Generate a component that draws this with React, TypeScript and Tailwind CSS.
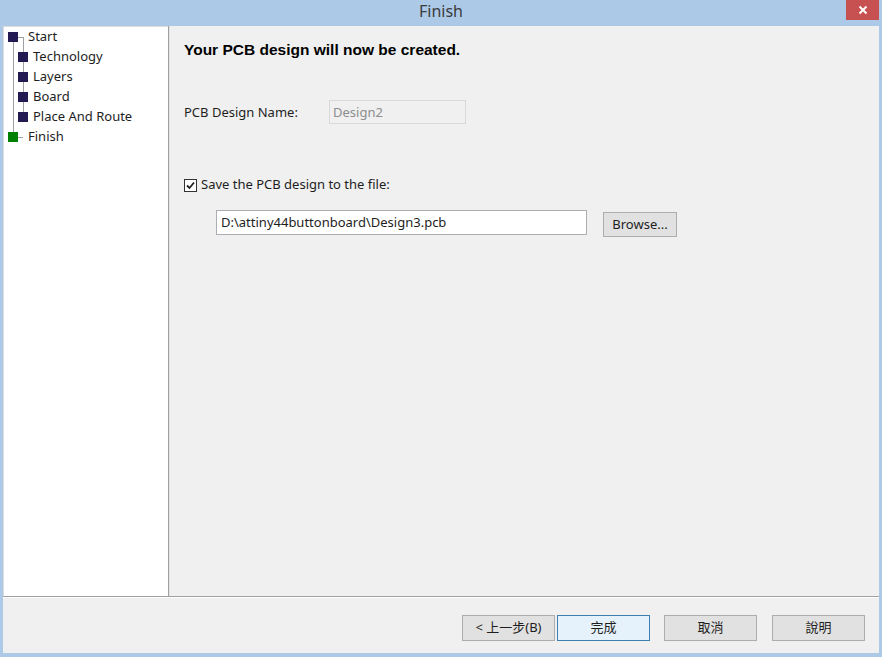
import React from 'react';

const ui = { fontFamily: '"Noto Sans", "Noto Sans CJK TC", sans-serif' };
const cjk = { fontFamily: '"Noto Sans", "Noto Sans CJK TC", sans-serif' };

type Node = { label: string; child: boolean; done?: boolean };

const steps: Node[] = [
  { label: 'Start', child: false },
  { label: 'Technology', child: true },
  { label: 'Layers', child: true },
  { label: 'Board', child: true },
  { label: 'Place And Route', child: true },
  { label: 'Finish', child: false, done: true },
];

const StepTree: React.FC = () => (
  <div className="relative">
    {/* tree lines */}
    <div className="absolute left-[9px] top-[10px] h-[100px] w-px bg-[#a0a0a0]" />
    <div className="absolute left-[19px] top-[10px] h-[80px] w-px bg-[#a0a0a0]" />
    <div className="absolute left-[14px] top-[10px] h-px w-[5px] bg-[#a0a0a0]" />
    <div className="absolute left-[14px] top-[110px] h-px w-[5px] bg-[#a0a0a0]" />
    {steps.map((s) => (
      <div key={s.label} className="relative flex h-[20px] items-center">
        <div
          className={
            s.child
              ? 'ml-[14px] h-[10px] w-[10px] bg-[#231a54]'
              : s.done
                ? 'ml-[4px] h-[10px] w-[10px] bg-[#008000]'
                : 'ml-[4px] h-[10px] w-[10px] bg-[#231a54]'
          }
        />
        <span className={s.child ? 'ml-[5px] text-[13px] text-[#1e1e1e]' : 'ml-[10px] text-[13px] text-[#1e1e1e]'}>
          {s.label}
        </span>
      </div>
    ))}
  </div>
);

const Btn: React.FC<{ children: React.ReactNode; primary?: boolean; className?: string }> = ({ children, primary, className }) => (
  <div
    className={
      (primary
        ? 'flex items-center justify-center border border-[#3c7fb1] bg-[#e5f1fb] text-[13px] text-[#1e1e1e] '
        : 'flex items-center justify-center border border-[#adadad] bg-[#e1e1e1] text-[13px] text-[#1e1e1e] ') + (className || '')
    }
  >
    {children}
  </div>
);

export default function App() {
  return (
    <div className="flex h-[657px] w-[882px] flex-col bg-[#adc9e8]" style={ui}>
      {/* title bar */}
      <div className="relative flex h-[26px] items-center justify-center pb-[4px]">
        <span className="text-[16px] text-[#3b3b3b]">Finish</span>
        <div className="absolute right-[3px] top-0 flex h-[20px] w-[33px] items-center justify-center bg-[#c75050]">
          <svg width="10" height="10" viewBox="0 0 10 10">
            <path d="M1.5 1.5 L8.5 8.5 M8.5 1.5 L1.5 8.5" stroke="#fff" strokeWidth="2" />
          </svg>
        </div>
      </div>

      <div className="mx-[3px] mb-[4px] flex flex-1 flex-col bg-[#f0f0f0]">
        <div className="flex h-[570px]">
          {/* left steps */}
          <div className="w-[165px] border-l border-t border-[#dcdcdc] bg-white">
            <StepTree />
          </div>
          <div className="w-px bg-[#a0a0a0]" />
          <div className="w-px bg-[#e3e3e3]" />

          {/* main content */}
          <div className="flex-1 pl-[14px] pt-[12px]">
            <h1
              className="text-[15.5px] font-bold text-black"
              style={{ fontFamily: '"Liberation Sans", Arial, sans-serif' }}
            >
              Your PCB design will now be created.
            </h1>

            <div className="mt-[39px] flex items-center">
              <span className="w-[145px] text-[13px] text-[#1e1e1e]">PCB Design Name:</span>
              <div className="flex h-[24px] w-[137px] items-center border border-[#d9d9d9] bg-[#f0f0f0] pl-[3px] text-[13px] text-[#8d8d8d]">
                Design2
              </div>
            </div>

            <div className="mt-[51px] flex items-center">
              <div className="flex h-[13px] w-[13px] items-center justify-center border border-[#333] bg-white">
                <svg width="9" height="9" viewBox="0 0 9 9">
                  <path d="M1 4.5 L3.5 7 L8 1.5" stroke="#222" strokeWidth="1.8" fill="none" />
                </svg>
              </div>
              <span className="ml-[4px] text-[13px] text-[#1e1e1e]">Save the PCB design to the file:</span>
            </div>

            <div className="ml-[32px] mt-[15px] flex items-start">
              <div className="flex h-[25px] w-[371px] items-center border border-[#abadb3] bg-white pl-[4px] text-[13px] text-[#1e1e1e]">
                D:\attiny44buttonboard\Design3.pcb
              </div>
              <Btn className="ml-[16px] mt-[2px] h-[25px] w-[74px]">Browse...</Btn>
            </div>
          </div>
        </div>

        {/* separator */}
        <div className="h-px bg-[#a0a0a0]" />
        <div className="h-px bg-white" />

        {/* bottom buttons */}
        <div className="flex flex-1 items-start justify-end pr-[14px] pt-[17px]" style={cjk}>
          <Btn className="h-[26px] w-[93px]">&lt; 上一步(B)</Btn>
          <Btn primary className="ml-[2px] h-[26px] w-[93px]">完成</Btn>
          <Btn className="ml-[14px] h-[26px] w-[93px]">取消</Btn>
          <Btn className="ml-[15px] h-[26px] w-[93px]">說明</Btn>
        </div>
      </div>
    </div>
  );
}
